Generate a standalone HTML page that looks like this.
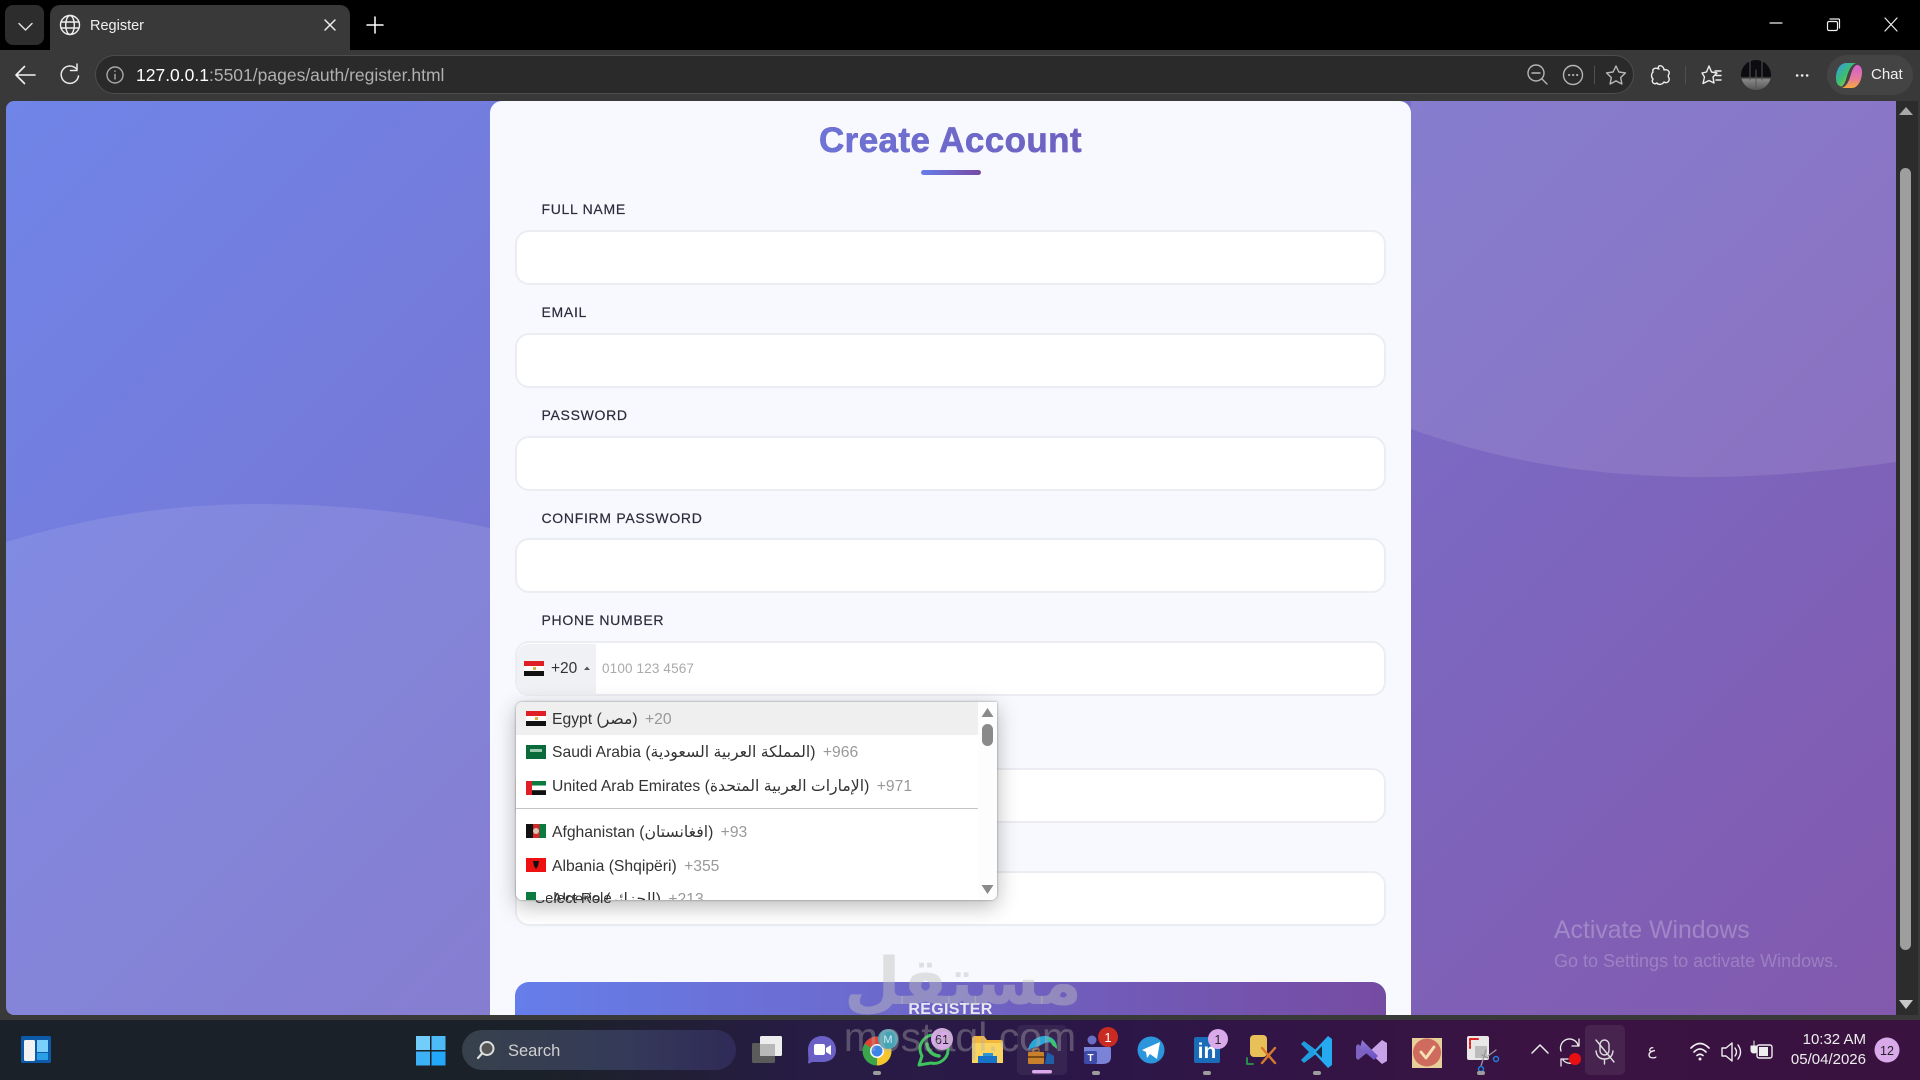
<!DOCTYPE html>
<html lang="en"><head><meta charset="utf-8"><title>Register</title>
<style>
*{box-sizing:border-box;margin:0;padding:0}
html,body{width:1920px;height:1080px;overflow:hidden;background:#000;font-family:"Liberation Sans","DejaVu Sans",sans-serif}
.a{position:absolute}
#tb{left:0;top:50px;width:1920px;height:970px;background:#393939}
#tab{left:50px;top:5px;width:300px;height:46px;background:#393939;border-radius:10px 10px 0 0}
#chev{left:5px;top:5px;width:39px;height:40px;background:#2d2d2d;border-radius:8px}
#addr{left:95px;top:55px;width:1539px;height:39px;background:#2a2a2a;border:1.5px solid #4c4c4c;border-radius:20px}
#url{left:136px;top:65px;font-size:17.5px;line-height:20px;color:#b0b0b0;white-space:nowrap}
#url b{font-weight:normal;color:#fff}
#chat{left:1827px;top:55px;width:86px;height:40px;background:#444;border-radius:20px}
#page{left:6px;top:101px;width:1890px;height:914px;border-radius:8px 0 0 8px;overflow:hidden;background:linear-gradient(135deg,#7085e8,#8259ad)}
#strack{left:1896px;top:101px;width:22px;height:914px;background:#2c2c2c}
#thumb{left:1900px;top:168px;width:11px;height:782px;background:#9e9e9e;border-radius:6px}
#card{left:490px;top:101px;width:921px;height:914px;background:#f8f9fe;border-radius:12px 12px 0 0;overflow:hidden}
#title{left:490px;width:921px;top:121px;text-align:center;font-size:35px;line-height:40px;font-weight:bold;letter-spacing:.4px}
#title span{background:linear-gradient(90deg,#6d74d8,#7060bd);-webkit-background-clip:text;background-clip:text;color:transparent;-webkit-text-stroke:.5px #6e6acb}
#ul{left:921px;top:170px;width:60px;height:5px;border-radius:3px;background:linear-gradient(90deg,#667eea,#764ba2)}
.lb{position:absolute;left:541.5px;font-size:14px;line-height:18px;letter-spacing:.7px;color:#2b2b3b;-webkit-text-stroke:.2px #2b2b3b;white-space:nowrap}
.in{position:absolute;left:515px;width:871px;height:55px;background:#fff;border:2px solid #ebedf2;border-radius:14px}
#cc{left:517px;top:644px;width:79px;height:51px;background:#f0f1f4;border-radius:12px 0 0 12px}
#code{left:551px;top:660px;font-size:15.5px;line-height:18px;color:#333}
#ph{left:602px;top:661px;font-size:13.5px;line-height:16px;color:#aaa;letter-spacing:.15px}
#dd{left:516px;top:702px;width:481px;height:198px;background:#fff;border-radius:6px 0 6px 6px;box-shadow:0 6px 22px rgba(0,0,0,.28),0 0 2px rgba(0,0,0,.4);overflow:hidden}
.r{position:absolute;left:0;width:462px;height:34px;padding-left:36px;font-size:15.7px;line-height:34px;color:#333;white-space:nowrap}
.r i{font-style:normal;color:#999;margin-left:3px}
#sel{left:535px;top:890px;font-size:15px;line-height:18px;color:#333;white-space:nowrap}
#btn{left:515px;top:982px;width:871px;height:33px;background:linear-gradient(90deg,#667eea,#764ba2);border-radius:14px 14px 0 0}
#btnt{left:515px;width:871px;top:1000px;text-align:center;font-size:16px;line-height:20px;font-weight:bold;color:#e8e6f2;letter-spacing:.3px}
#act{left:1554px;top:916px;font-size:24.8px;line-height:30px;color:rgba(255,255,255,.25);white-space:nowrap}
#act2{left:1554px;top:951px;font-size:18px;line-height:20px;color:rgba(255,255,255,.22);white-space:nowrap}
#task{left:0;top:1020px;width:1920px;height:60px;background:linear-gradient(90deg,#1b2128 0,#1b2128 28%,#271c44 42%,#2c1648 58%,#3a1342 80%,#3a1240 100%)}
#srch{left:462px;top:1030px;width:274px;height:40px;border-radius:20px;background:linear-gradient(90deg,#37414c,#343a58 60%,#302a58)}
#srcht{left:508px;top:1041px;font-size:16.5px;line-height:20px;color:#d0d0d0}
#tm{left:1766px;width:100px;top:1030px;text-align:right;font-size:15px;line-height:20px;color:#eee;white-space:nowrap}
#wm1{left:813px;width:300px;top:928px;text-align:center;font:bold 65px/110px "DejaVu Sans",sans-serif;color:rgba(190,190,190,.45);direction:rtl}
#wm2{left:760px;width:400px;top:1016px;text-align:center;font-size:41px;line-height:42px;color:rgba(175,175,175,.38)}
svg{position:absolute;left:0;top:0}
</style></head><body>
<div class="a" id="tb"></div>
<div class="a" id="chev"></div>
<div class="a" id="tab"></div>
<div class="a" style="left:90px;top:17px;font-size:14.5px;line-height:18px;color:#f0f0f0">Register</div>
<div class="a" id="addr"></div>
<div class="a" id="url"><b>127.0.0.1</b>:5501/pages/auth/register.html</div>
<div class="a" id="chat"></div>
<div class="a" style="left:1871px;top:65px;font-size:15px;line-height:20px;color:#f0f0f0">Chat</div>

<div class="a" id="page">
<svg width="1890" height="914" style="left:0;top:0">
<path d="M0 441C90 414 170 403 254 403C340 403 420 413 484 427V914H0Z" fill="#fff" fill-opacity=".1"/>
<path d="M1405 0H1890V361C1810 372 1750 376 1700 376C1590 376 1500 362 1405 328Z" fill="#fff" fill-opacity=".1"/>
</svg>
</div>
<div class="a" id="strack"></div>
<div class="a" id="thumb"></div>
<div class="a" id="card"></div>
<div class="a" id="title"><span>Create Account</span></div>
<div class="a" id="ul"></div>

<div class="lb" style="top:200px">FULL NAME</div><div class="in" style="top:230px"></div>
<div class="lb" style="top:303px">EMAIL</div><div class="in" style="top:333px"></div>
<div class="lb" style="top:406px">PASSWORD</div><div class="in" style="top:436px"></div>
<div class="lb" style="top:509px">CONFIRM PASSWORD</div><div class="in" style="top:538px"></div>
<div class="lb" style="top:611px">PHONE NUMBER</div><div class="in" style="top:641px"></div>
<div class="a" id="cc"></div>
<div class="a" id="code">+20</div>
<div class="a" id="ph">0100 123 4567</div>
<div class="in" style="top:768px"></div>
<div class="in" style="top:871px"></div>
<div class="a" id="btn"></div>
<div class="a" id="btnt">REGISTER</div>

<div class="a" id="dd">
<div class="a" style="left:0;top:0;width:462px;height:33px;background:#efefef"></div>
<div class="a" style="left:462px;top:0;width:19px;height:198px;background:#fdfdfd"></div>
<div class="r" style="top:1px">Egypt (مصر) <i>+20</i></div>
<div class="r" style="top:34px">Saudi Arabia (المملكة العربية السعودية) <i>+966</i></div>
<div class="r" style="top:68px">United Arab Emirates (الإمارات العربية المتحدة) <i>+971</i></div>
<div class="a" style="left:0;top:106px;width:462px;height:1px;background:#c4c4c4"></div>
<div class="r" style="top:114px">Afghanistan (افغانستان) <i>+93</i></div>
<div class="r" style="top:148px">Albania (Shqipëri) <i>+355</i></div>
<div class="r" style="top:181px">Algeria (الجزائر) <i>+213</i></div>
</div>
<div class="a" id="sel">Select Role</div>

<div class="a" id="act">Activate Windows</div>
<div class="a" id="act2">Go to Settings to activate Windows.</div>

<div class="a" id="task"></div>
<div class="a" id="srch"></div>
<div class="a" id="srcht">Search</div>
<div class="a" id="tm">10:32 AM<br>05/04/2026</div>
<div class="a" style="left:1640px;top:1040px;font:15px/20px 'DejaVu Sans',sans-serif;color:#eee;width:24px;text-align:center">ع</div>

<svg width="1920" height="1080" viewBox="0 0 1920 1080" fill="none" stroke-linecap="round" stroke-linejoin="round">
<!-- top chrome -->
<path d="M19 23.5L25.5 30L32 23.5" stroke="#ddd" stroke-width="1.5"/>
<g stroke="#eee" stroke-width="1.4"><circle cx="70" cy="25" r="9.5"/><ellipse cx="70" cy="25" rx="4.3" ry="9.5"/><path d="M61 22H79M61 28H79"/></g>
<path d="M325 20L335 30M335 20L325 30" stroke="#eee" stroke-width="1.5"/>
<path d="M375 17V33M367 25H383" stroke="#fff" stroke-width="1.5"/>
<path d="M35 75H16M24.5 66.5L16 75L24.5 83.5" stroke="#f2f2f2" stroke-width="1.6"/>
<path d="M76.5 69A8.7 8.7 0 1 0 78.5 76" stroke="#e8e8e8" stroke-width="1.5"/><path d="M77 64V70.5H70.5" stroke="#e8e8e8" stroke-width="1.5"/>
<circle cx="115" cy="75" r="8" stroke="#a8a8a8" stroke-width="1.4"/><path d="M115 74.5V79M115 71V71.4" stroke="#a8a8a8" stroke-width="1.4"/>
<path d="M1770 23H1782" stroke="#eee" stroke-width="1.2"/>
<rect x="1827.5" y="21.5" width="10" height="9" rx="1.5" stroke="#eee" stroke-width="1.2"/><path d="M1830 19H1838.5Q1839.5 19 1839.5 20V28" stroke="#eee" stroke-width="1.2"/>
<path d="M1885 18L1897 31M1897 18L1885 31" stroke="#eee" stroke-width="1.2"/>
<circle cx="1536" cy="73" r="8" stroke="#b5b5b5" stroke-width="1.4"/><path d="M1532 73H1540M1542 79L1547 84" stroke="#b5b5b5" stroke-width="1.4"/>
<circle cx="1573" cy="75" r="9.5" stroke="#b5b5b5" stroke-width="1.4"/><path d="M1569 75H1569.3M1573 75H1573.3M1577 75H1577.3" stroke="#b5b5b5" stroke-width="2"/>
<path d="M1594.5 66V84M1685.5 66V84" stroke="#4f4f4f" stroke-width="1"/>
<path d="M1616 66L1618.9 72L1625.5 72.9L1620.7 77.5L1621.9 84L1616 80.9L1610.1 84L1611.3 77.5L1606.5 72.9L1613.1 72Z" stroke="#b8b8b8" stroke-width="1.4"/>
<path d="M1659 66C1661 65 1664 67 1664 70C1667 69 1670 71 1669 74C1668 75 1668 77 1669 78C1670 81 1667 84 1664 82C1662 85 1658 85 1657 83C1654 85 1651 82 1653 79C1651 77 1651 74 1653 72C1652 69 1655 67 1659 69C1658 68 1658 67 1659 66Z" stroke="#eee" stroke-width="1.4"/>
<path d="M1709 66L1711.5 72L1717 73L1713 77L1714 83L1709 80.5L1703 83.5L1704.5 77L1702 73L1706.5 72Z" stroke="#eee" stroke-width="1.4"/><path d="M1715 71H1721M1716 75.5H1721M1716 80H1721" stroke="#eee" stroke-width="1.4"/>
<defs><linearGradient id="av" x1="0" y1="0" x2="0" y2="1"><stop offset=".55" stop-color="#0c0c10"/><stop offset=".65" stop-color="#888"/><stop offset="1" stop-color="#555"/></linearGradient>
<linearGradient id="co1" x1="0" y1="0" x2="1" y2="1"><stop offset="0" stop-color="#2e9bf0"/><stop offset=".5" stop-color="#3fc06a"/><stop offset="1" stop-color="#f3c53a"/></linearGradient>
<linearGradient id="co2" x1="0" y1="0" x2="0" y2="1"><stop offset="0" stop-color="#d35fd0"/><stop offset=".6" stop-color="#e77a9b"/><stop offset="1" stop-color="#f5a83c"/></linearGradient>
<linearGradient id="vs" x1="0" y1="0" x2="0" y2="1"><stop offset="0" stop-color="#8f7bd6"/><stop offset="1" stop-color="#6a4ec0"/></linearGradient></defs>
<circle cx="1756" cy="75" r="15" fill="url(#av)"/><path d="M1750 61V80M1762 61V80M1756 70V88" stroke="#555" stroke-width="1"/>
<path d="M1797 75.5H1797.3M1802 75.5H1802.3M1807 75.5H1807.3" stroke="#eee" stroke-width="2.4"/>
<path d="M1836 78C1836 70 1840 63 1846 63H1856C1851 65 1849 70 1847 76C1845 84 1842 88 1840 86C1837 85 1836 82 1836 78Z" fill="url(#co1)"/>
<path d="M1862 72C1862 80 1858 88 1852 88H1842C1847 86 1849 81 1851 74C1853 67 1856 64 1858 65C1861 66 1862 69 1862 72Z" fill="url(#co2)"/>
<!-- scrollbar arrows -->
<path d="M1906 107L1913 115H1899Z" fill="#a8a8a8"/><path d="M1899 1000H1913L1906 1009Z" fill="#c8c8c8"/>
<path d="M584 670L590 670L587 666.5Z" fill="#555"/>
<!-- dropdown scrollbar -->
<path d="M987.5 708L993.5 717H981.5Z" fill="#8a8a8a"/><path d="M981.5 885H993.5L987.5 894Z" fill="#8a8a8a"/><rect x="982" y="724" width="11" height="22" rx="5.5" fill="#8a8a8a"/>
<!-- phone flag -->
<rect x="524" y="661" width="20" height="5" fill="#e01e25"/><rect x="524" y="666" width="20" height="5" fill="#fff"/><rect x="524" y="671" width="20" height="5" fill="#111"/><rect x="533" y="667" width="3" height="3" fill="#e0b040"/>
<!-- dropdown flags -->
<rect x="526" y="711" width="20" height="5" fill="#e01e25"/><rect x="526" y="716" width="20" height="5" fill="#fff"/><rect x="526" y="721" width="20" height="5" fill="#111"/><rect x="535" y="717" width="3" height="3" fill="#e0b040"/>
<rect x="526" y="745" width="20" height="14" fill="#0a6b3a"/><rect x="530" y="749" width="12" height="3" fill="#9cc9ae"/>
<rect x="526" y="781" width="20" height="4.6" fill="#0a7a3e"/><rect x="526" y="785.6" width="20" height="4.6" fill="#fff"/><rect x="526" y="790.2" width="20" height="4.8" fill="#111"/><rect x="526" y="781" width="6" height="14" fill="#e01e25"/>
<rect x="526" y="824" width="7" height="14" fill="#111"/><rect x="533" y="824" width="6.5" height="14" fill="#cf2a2a"/><rect x="539.5" y="824" width="6.5" height="14" fill="#0a7a3e"/><circle cx="536" cy="831" r="3" fill="#e0c0b0"/>
<rect x="526" y="858" width="20" height="14" fill="#ee1111"/><path d="M533 861L539 861L538 866L536 869L534 866Z" fill="#111"/>
<g><rect x="526" y="892" width="10" height="8" fill="#0a7a3e"/><rect x="536" y="892" width="10" height="8" fill="#fff"/></g>
<!-- taskbar -->
<rect x="21" y="1036" width="30" height="27" rx="1.5" fill="#0d5aa9"/><rect x="24" y="1040" width="11" height="21" rx="1.5" fill="#f2f2f2"/><rect x="37" y="1040" width="11" height="12" fill="#79d0fb"/><rect x="37" y="1053" width="11" height="7" fill="#2a9ee6"/>
<rect x="416" y="1036" width="14" height="14" fill="#72cdfb"/><rect x="431.5" y="1036" width="14" height="14" fill="#4dbbf8"/><rect x="416" y="1051.5" width="14" height="14" fill="#3cb1f6"/><rect x="431.5" y="1051.5" width="14" height="14" fill="#23a7f8"/>
<circle cx="487" cy="1048.5" r="6.5" stroke="#ddd" stroke-width="2" fill="#555"/><path d="M482 1053.5L478 1058" stroke="#ddd" stroke-width="2.2"/>
<rect x="752" y="1043" width="23" height="20" rx="1.5" fill="#5b5b5b"/><rect x="760" y="1036" width="22" height="20" rx="1.5" fill="#ededed"/><rect x="760" y="1044" width="15" height="12" fill="#b8b8b8"/>
<path d="M822 1036C830 1036 836 1042 836 1050C836 1058 830 1062 822 1062H812C809 1064 808 1064 808 1062C809 1060 808 1056 808 1050C808 1042 814 1036 822 1036Z" fill="#6b60c6"/><rect x="814" y="1044" width="11" height="11" rx="2" fill="#fff"/><path d="M826 1048L831 1045V1055L826 1052Z" fill="#fff"/>
<circle cx="877" cy="1051" r="14.5" fill="#3aa54a"/><path d="M877 1051L864.5 1043.7A14.5 14.5 0 0 1 889.5 1043.7Z" fill="#df4436"/><path d="M877 1051L889.5 1043.7A14.5 14.5 0 0 1 877 1065.5Z" fill="#f7c62f"/><circle cx="877" cy="1051" r="7" fill="#fff"/><circle cx="877" cy="1051" r="5.5" fill="#3d84e8"/>
<circle cx="888" cy="1039" r="10" fill="#47a3b6"/>
<g transform="translate(0,-2)"><path d="M919 1067L922 1058C916 1047 925 1037 933 1037C942 1037 948 1044 948 1052C948 1060 940 1067 931 1065Z" stroke="#3fc35d" stroke-width="3"/><path d="M927 1046C928 1053 932 1057 939 1058" stroke="#3fc35d" stroke-width="3.5"/></g>
<circle cx="942" cy="1039" r="11" fill="#d9a9ea"/>
<path d="M972 1039Q972 1036 975 1036H984L987 1040H1001Q1003 1040 1003 1042V1063H972Z" fill="#f4b83f"/><rect x="972" y="1043" width="31" height="20" fill="#fbd45f"/><rect x="978" y="1056" width="19" height="7" fill="#1773c7"/><rect x="983" y="1053" width="10" height="3" fill="#2a95d8"/>
<rect x="1017" y="1025" width="50" height="50" rx="5" fill="#fff" fill-opacity=".06"/><rect x="1032" y="1070" width="20" height="3.5" rx="1.7" fill="#dca9ec"/>
<path d="M1028 1050C1030 1040 1038 1036 1045 1036C1053 1036 1057 1042 1057 1048C1054 1042 1048 1041 1043 1044C1038 1047 1034 1047 1028 1050Z" fill="#2aa5d8"/><path d="M1047 1037C1053 1038 1057 1043 1057 1049L1052 1045C1051 1042 1049 1040 1047 1037Z" fill="#3ec46d"/>
<rect x="1028" y="1052" width="16" height="12" rx="1" fill="#c8812a"/><rect x="1028" y="1056" width="16" height="2" fill="#7a4a14"/><rect x="1033" y="1049" width="6" height="3" stroke="#c8812a"/><path d="M1045 1064H1054V1056L1047 1052Z" fill="#1f5fa8"/>
<circle cx="1092" cy="1040" r="4.5" fill="#6a6fc4"/><path d="M1084 1047H1110Q1111 1047 1111 1050V1057Q1111 1064 1102 1064H1093Q1084 1064 1084 1057Z" fill="#7b83d8"/><rect x="1084" y="1051" width="13" height="13" rx="2" fill="#3f4aa8"/><text x="1090.5" y="1061" font-size="10" font-weight="bold" fill="#fff" stroke="none" text-anchor="middle" font-family="Liberation Sans">T</text>
<circle cx="1108" cy="1037" r="10" fill="#c92a22"/>
<circle cx="1151" cy="1050" r="13.5" fill="#2b96dc"/><path d="M1142 1050L1160 1042L1157 1059L1150 1054L1147 1058L1146 1052Z" fill="#fff"/>
<rect x="1194" y="1037" width="26" height="26" rx="2" fill="#1a6cb8"/><text x="1207" y="1058" font-size="21" font-weight="bold" fill="#fff" stroke="none" text-anchor="middle" font-family="Liberation Sans">in</text>
<circle cx="1218" cy="1039" r="10" fill="#d9a9ea"/>
<rect x="1250" y="1035" width="17" height="22" rx="4" fill="#e8c058"/><path d="M1262 1048L1275 1063M1275 1048L1262 1063" stroke="#d87a2a" stroke-width="2.4"/><path d="M1247 1058V1064H1253" stroke="#2a9a4a" stroke-width="1.8"/>
<path d="M1328 1040L1316 1050L1304 1041L1301 1044L1309 1052L1301 1060L1304 1063L1316 1054L1328 1064L1332 1062V1042Z" fill="#1f9de0"/><path d="M1328 1036L1313 1052L1328 1068L1332 1065V1039Z" fill="#25aaf2"/><path d="M1322 1046L1316 1052L1322 1058Z" fill="#1b2a44"/>
<path d="M1382 1040L1369 1052L1382 1064L1387 1061V1043Z" fill="#c9a3e8"/><path d="M1358 1044L1368 1052L1358 1060L1356 1058V1046Z" fill="#7e62c2"/><path d="M1362 1040L1378 1056L1374 1060L1360 1048Z" fill="url(#vs)"/>
<rect x="1412" y="1038" width="30" height="30" fill="#e8cf9a"/><circle cx="1427" cy="1052.5" r="14" fill="#cf6a5e"/><path d="M1421 1052L1426 1058L1434 1047" stroke="#f6e3b4" stroke-width="2.8"/>
<rect x="1467" y="1036" width="22" height="24" rx="2" fill="#e8e8e8"/><path d="M1470 1039H1478M1470 1039V1048" stroke="#e02020" stroke-width="2" stroke-dasharray="2 1.5"/><rect x="1475" y="1046" width="12" height="12" fill="#bcbcbc"/><path d="M1482 1055L1488 1058M1486 1050L1481 1066M1496 1050L1488 1056" stroke="#999" stroke-width="1.3"/><circle cx="1481" cy="1069" r="2.5" stroke="#1f7fe0" stroke-width="1.5"/><circle cx="1496" cy="1059" r="2.5" stroke="#1f7fe0" stroke-width="1.5"/>
<g fill="#9c9c9c" stroke="none"><rect x="873" y="1071" width="8" height="4" rx="2"/><rect x="1092" y="1071" width="8" height="4" rx="2"/><rect x="1203" y="1071" width="8" height="4" rx="2"/><rect x="1313" y="1071" width="8" height="4" rx="2"/><rect x="1477" y="1071" width="8" height="4" rx="2"/></g>
<path d="M1532 1053L1540 1045L1548 1053" stroke="#eee" stroke-width="1.5"/>
<path d="M1561 1051A9 9 0 0 1 1578 1045M1579 1039V1046H1572M1578 1058A9 9 0 0 1 1563 1060M1561 1066V1059H1568" stroke="#eee" stroke-width="1.3"/><circle cx="1575" cy="1059" r="6" fill="#e81010"/>
<rect x="1585" y="1025" width="40" height="50" rx="5" fill="#fff" fill-opacity=".07"/>
<rect x="1600" y="1040" width="9" height="15" rx="4.5" stroke="#ddd" stroke-width="1.4"/><path d="M1596 1051Q1597 1059 1604.5 1059Q1612 1059 1613 1051M1604.5 1059V1064M1596 1040L1614 1062" stroke="#ddd" stroke-width="1.4"/>
<path d="M1691 1048Q1700 1039 1709 1048M1694 1052Q1700 1046 1706 1052M1697 1055.5Q1700 1053 1703 1055.5" stroke="#eee" stroke-width="1.7"/><circle cx="1700" cy="1059" r="1.5" fill="#eee"/>
<path d="M1722 1048H1726L1732 1043V1061L1726 1056H1722Z" stroke="#eee" stroke-width="1.4"/><path d="M1735 1048Q1738 1052 1735 1056M1738 1045Q1743 1052 1738 1059" stroke="#eee" stroke-width="1.4"/>
<rect x="1757" y="1045" width="15" height="13" rx="2" stroke="#eee" stroke-width="1.4"/><rect x="1759" y="1047" width="9" height="9" fill="#eee"/><path d="M1754 1041V1046M1751 1046H1757V1050Q1757 1053 1754 1053Q1751 1053 1751 1050Z" fill="#eee" stroke="#eee" stroke-width="1"/>
<circle cx="1887" cy="1050" r="12.5" fill="#d9a9ea"/>
<g font-family="Liberation Sans" stroke="none" text-anchor="middle" fill="#222" font-size="12.5"><text x="1887" y="1055">12</text><text x="942" y="1044">61</text><text x="1218" y="1044">1</text></g>
<text x="1108" y="1042" font-family="Liberation Sans" font-size="13" stroke="none" fill="#fff" text-anchor="middle">1</text>
<text x="888" y="1043" font-family="Liberation Sans" font-size="11" stroke="none" fill="#cfeef2" text-anchor="middle">M</text>
</svg>

<div class="a" id="wm1">مستقل</div>
<div class="a" id="wm2">mostaql.com</div>
</body></html>
